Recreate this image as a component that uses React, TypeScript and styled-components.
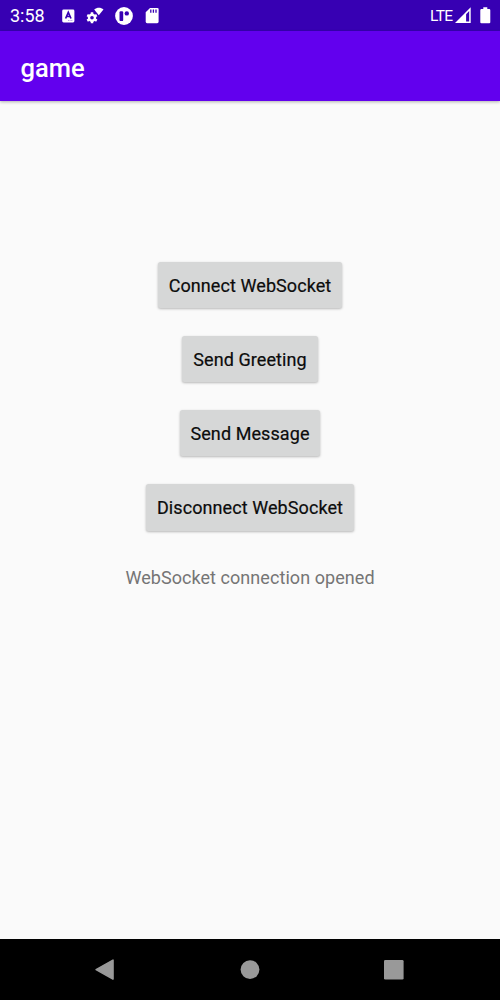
import React from "react";
import styled, { createGlobalStyle } from "styled-components";

const GlobalStyle = createGlobalStyle`
  * { box-sizing: border-box; }
  body { margin: 0; background: #fafafa; font-family: Roboto, "Noto Sans", sans-serif; }
`;

const Screen = styled.div`
  width: 500px;
  height: 1000px;
  display: flex;
  flex-direction: column;
  overflow: hidden;
  background: #fafafa;
`;

const StatusBar = styled.header`
  height: 31px;
  flex: none;
  display: flex;
  align-items: center;
  justify-content: space-between;
  padding: 0 9px 0 10px;
  background: #3700b3;
  color: #fff;
`;

const StatusGroup = styled.div<{ $gap: number }>`
  display: flex;
  align-items: center;
  gap: ${(p) => p.$gap}px;
  svg { display: block; }
`;

const Clock = styled.span`
  width: 41px;
  font-size: 18px;
  line-height: 32px;
`;

const Network = styled.span`
  padding-top: 1px;
  font-size: 15.5px;
  line-height: 31px;
  letter-spacing: -0.6px;
`;

const AppBar = styled.div`
  height: 70px;
  flex: none;
  display: flex;
  align-items: center;
  padding: 5px 20.5px 0;
  background: #6200ee;
  box-shadow: 0 1px 3px rgba(0, 0, 0, 0.3);
`;

const Title = styled.h1`
  margin: 0;
  color: #fff;
  font-size: 25.5px;
  font-weight: 500;
  line-height: 31px;
`;

const Content = styled.main`
  flex: 1;
  display: flex;
  flex-direction: column;
  align-items: center;
  gap: 28px;
  padding-top: 161px;
`;

const Button = styled.button`
  height: 46.15px;
  padding: 2px 10.8px 0;
  border: 0;
  border-radius: 2.5px;
  background: #d6d7d7;
  color: #0c0c0c;
  font: 400 18px/24px Roboto, "Noto Sans", sans-serif;
  letter-spacing: 0.08px;
  -webkit-text-stroke: 0.2px #0c0c0c;
  box-shadow: 0 1px 2.5px rgba(0, 0, 0, 0.27);
`;

const Status = styled.p`
  margin: 6px 0 0;
  color: #757575;
  font-size: 18px;
  line-height: 25px;
  letter-spacing: 0.06px;
`;

const NavBar = styled.nav`
  height: 61px;
  flex: none;
  display: flex;
  align-items: center;
  justify-content: space-between;
  padding: 0 95px;
  background: #000;
  svg { display: block; }
`;

const ACTIONS = ["Connect WebSocket", "Send Greeting", "Send Message", "Disconnect WebSocket"];

const KeyboardIcon = () => (
  <svg width="13" height="14" viewBox="0 0 13 14">
    <rect x="0.2" y="0.6" width="12.2" height="12.8" rx="1.4" fill="#fff" />
    <path d="M3.6 9.5 6.3 3.4 9 9.5M4.6 7.5H8" fill="none" stroke="#3700b3" strokeWidth="1.7" />
    <path d="M6 11.6h5" stroke="#3700b3" strokeWidth="0.7" strokeDasharray="1 0.6" opacity="0.6" />
  </svg>
);

const GearWifiIcon = () => (
  <svg width="18" height="17" viewBox="0 0 18 17" fill="#fff">
    <path d="M8.2 2.4C11 .1 14.8 .1 17.5 2.4L12.8 8.2Z" />
    <circle cx="6" cy="10.8" r="3" fill="none" stroke="#fff" strokeWidth="2.4" />
    <g stroke="#fff" strokeWidth="2.5">
      <path d="M6 5.3v2M6 14.3v2M1.24 8.05l1.75 1M9.01 12.55l1.75 1M1.24 13.55l1.75-1M9.01 9.05l1.75-1" />
    </g>
  </svg>
);

const DiscIcon = () => (
  <svg width="18" height="18" viewBox="0 0 18 18">
    <circle cx="9" cy="9" r="8.9" fill="#fff" />
    <rect x="4.5" y="4.2" width="3.7" height="9.9" rx="1.2" fill="#3700b3" />
    <circle cx="11.8" cy="6.4" r="2.2" fill="#3700b3" />
  </svg>
);

const SdCardIcon = () => (
  <svg width="15" height="17" viewBox="-1.4 0 15 17">
    <path d="M4.6 .9h7.4q1.2 0 1.2 1.2v12.7q0 1.4-1.4 1.4H1.7Q.3 16.2.3 14.8V5.2Z" fill="#fff" />
    <path d="M5.4 2.6v3.1M8 2.6v3.1M10.6 2.6v3.1" stroke="#3700b3" strokeWidth="1.3" />
  </svg>
);

const SignalIcon = () => (
  <svg width="17" height="17" viewBox="0 0 17 17">
    <path d="M0 16 15.7 .3V16Z" fill="#fff" />
    <path d="M11.1 7.2 14.2 4.1V14.5H11.1Z" fill="#3700b3" />
  </svg>
);

const BatteryIcon = () => (
  <svg width="11" height="17" viewBox="0 0 11 17" fill="#fff">
    <path d="M3.3.3h4v1.8h1.9q1.1 0 1.1 1.1v12q0 1.1-1.1 1.1H1.4Q.3 16.3.3 15.2v-12q0-1.1 1.1-1.1h1.9Z" />
  </svg>
);

export default function App() {
  return (
    <>
      <GlobalStyle />
      <Screen>
        <StatusBar>
          <StatusGroup $gap={11}>
            <Clock>3:58</Clock>
            <KeyboardIcon />
            <GearWifiIcon />
            <DiscIcon />
            <SdCardIcon />
          </StatusGroup>
          <StatusGroup $gap={8.5}>
            <StatusGroup $gap={2}>
              <Network>LTE</Network>
              <SignalIcon />
            </StatusGroup>
            <BatteryIcon />
          </StatusGroup>
        </StatusBar>
        <AppBar>
          <Title>game</Title>
        </AppBar>
        <Content>
          {ACTIONS.map((label) => (
            <Button key={label}>{label}</Button>
          ))}
          <Status>WebSocket connection opened</Status>
        </Content>
        <NavBar>
          <svg width="20" height="22" viewBox="0 0 20 22">
            <path d="M1.1 10.6 18 1.1V20.1Z" fill="#999" stroke="#999" strokeWidth="1.6" strokeLinejoin="round" />
          </svg>
          <svg width="20" height="20" viewBox="0 0 20 20">
            <circle cx="10" cy="9.6" r="9.4" fill="#999" />
          </svg>
          <svg width="21" height="20" viewBox="0 0 21 20">
            <rect x="0" y="0" width="19.6" height="19.6" rx="1.3" fill="#999" />
          </svg>
        </NavBar>
      </Screen>
    </>
  );
}
